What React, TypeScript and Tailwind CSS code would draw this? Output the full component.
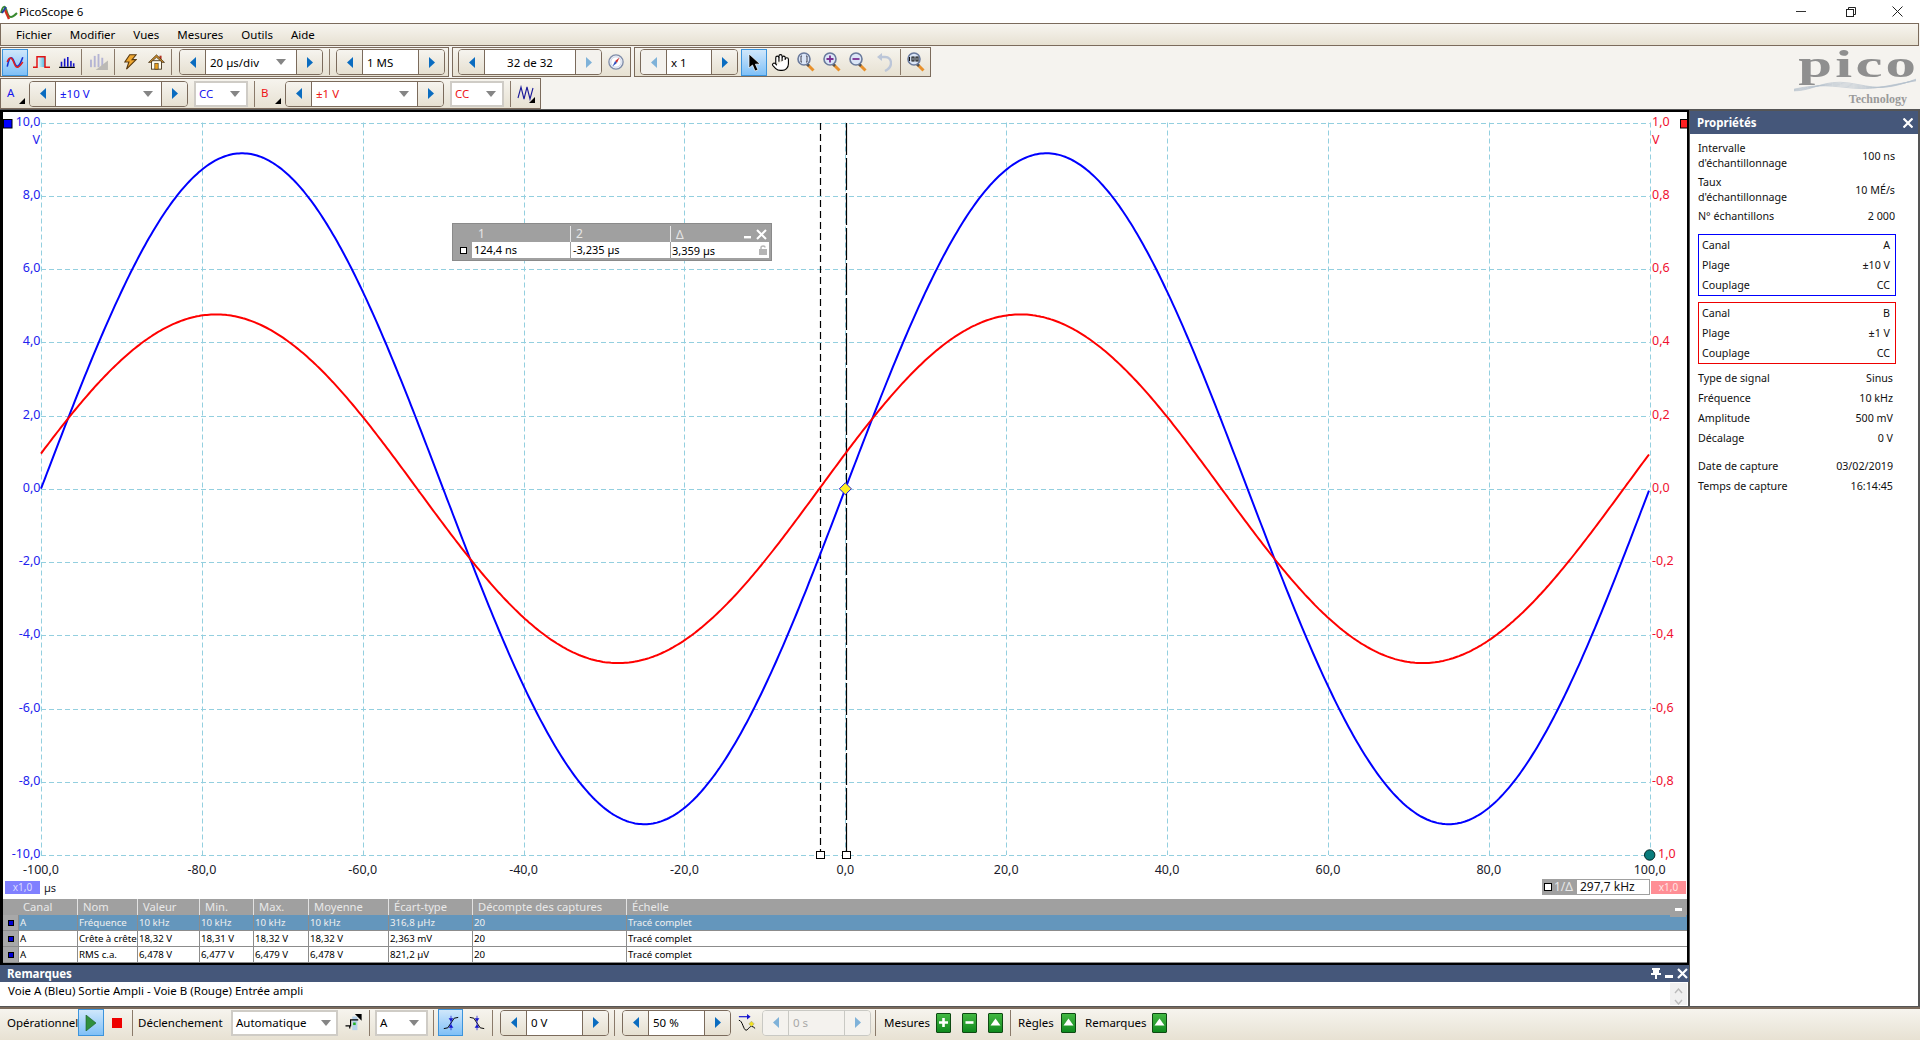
import React from "react";
import { Hand } from "lucide-react";

const Tri = ({ dir, off }: { dir: "l" | "r"; off?: boolean }) => (
  <svg width="8" height="13" viewBox="0 0 8 13">
    <polygon points={dir === "l" ? "7,1 7,12 1,6.5" : "1,1 1,12 7,6.5"} fill={off ? "#7fb2d9" : "#0a6cc0"} />
  </svg>
);

const Drop = () => (
  <svg width="10" height="6" viewBox="0 0 10 6">
    <polygon points="0,0 10,0 5,6" fill="#858585" />
  </svg>
);

const Corner = () => (
  <svg width="6" height="6" viewBox="0 0 6 6">
    <polygon points="6,0 6,6 0,6" fill="#000" />
  </svg>
);

const Sep = ({ ml = 0, mr = 0 }: { ml?: number; mr?: number }) => (
  <div className="w-px h-[26px] bg-[#8a7a6a] shrink-0" style={{ marginLeft: ml, marginRight: mr }} />
);

const Spin = ({
  w, side = 25, text, color = "#000", center, off, ml = 0, rightOff, leftOff,
}: {
  w: number; side?: number; text: string; color?: string; center?: boolean; off?: boolean; ml?: number; rightOff?: boolean; leftOff?: boolean;
}) => (
  <div
    className={`flex h-[26px] shrink-0 rounded-[4px] border overflow-hidden ${off ? "border-[#c9c9c4]" : "border-[#7b6b5c]"}`}
    style={{ width: w, marginLeft: ml }}
  >
    <div className={`flex items-center justify-center ${off || leftOff ? "bg-[#f4f2ee]" : "bg-gradient-to-b from-[#f6f4ef] to-[#e6e0d1]"}`} style={{ width: side }}>
      <Tri dir="l" off={off || leftOff} />
    </div>
    <div className={`flex-1 flex items-center px-[4px] border-x ${off ? "bg-[#f4f2ee] border-[#c9c9c4] text-[#a8a8a8]" : "bg-white border-[#7b6b5c]"} ${center ? "justify-center" : ""}`} style={off ? undefined : { color }}>
      {text}
    </div>
    <div className={`flex items-center justify-center ${off || rightOff ? "bg-[#f4f2ee]" : "bg-gradient-to-b from-[#f6f4ef] to-[#e6e0d1]"}`} style={{ width: side }}>
      <Tri dir="r" off={off || rightOff} />
    </div>
  </div>
);

const DropSpin = ({ w, text, color = "#000", ml, pr = 8 }: { w: number; text: string; color?: string; ml?: number; pr?: number }) => (
  <div className="flex h-[26px] shrink-0 rounded-[4px] border border-[#7b6b5c] overflow-hidden" style={{ width: w, marginLeft: ml }}>
    <div className="w-[25px] flex items-center justify-center bg-gradient-to-b from-[#f6f4ef] to-[#e6e0d1]"><Tri dir="l" /></div>
    <div className="flex-1 flex items-center justify-between pl-[4px] bg-white border-x border-[#7b6b5c]" style={{ color, paddingRight: pr }}>
      <span>{text}</span><Drop />
    </div>
    <div className="w-[25px] flex items-center justify-center bg-gradient-to-b from-[#f6f4ef] to-[#e6e0d1]"><Tri dir="r" /></div>
  </div>
);

const Combo = ({ w, text, color = "#000", ml = 0, pr = 6 }: { w: number; text: string; color?: string; ml?: number; pr?: number }) => (
  <div className="flex items-center justify-between h-[26px] shrink-0 bg-white border-2 border-[#cfccc6] pl-[3px]" style={{ width: w, marginLeft: ml, paddingRight: pr, color }}>
    <span>{text}</span><Drop />
  </div>
);

const Active = ({ children, w = 26, ml = 0 }: { children: React.ReactNode; w?: number; ml?: number }) => (
  <div className="flex items-center justify-center h-[27px] shrink-0 border border-[#3c94dc] bg-gradient-to-b from-[#cfe7fb] to-[#7fc0f7]" style={{ width: w, marginLeft: ml }}>
    {children}
  </div>
);

const Cell = ({ w, ml = 0, children }: { w: number; ml?: number; children: React.ReactNode }) => (
  <div className="flex items-center justify-center h-[27px] shrink-0" style={{ width: w, marginLeft: ml }}>{children}</div>
);

const WaveIcon = () => (
  <svg width="18" height="14" viewBox="0 0 22 18" fill="none" strokeWidth="2">
    <path d="M1 15C4 1 7 1 10 9S16 17 21 3" stroke="#1530d0" />
    <path d="M1 9C4 1 7 3 10 11S16 16 21 9" stroke="#e02020" />
  </svg>
);
const SquareIcon = () => (
  <svg width="17" height="12" viewBox="0 0 17 12" fill="none">
    <defs>
      <linearGradient id="sq" x1="0" x2="1" y1="0" y2="0">
        <stop offset="0" stopColor="#ffffff" /><stop offset="1" stopColor="#4ab8e0" />
      </linearGradient>
    </defs>
    <rect x="4" y="1" width="8" height="10" fill="url(#sq)" />
    <path d="M0 11.2H4V0.8H12V11.2H17" stroke="#e01414" strokeWidth="1.5" />
  </svg>
);
const BarsIcon = () => (
  <svg width="16" height="11" viewBox="0 0 20 14">
    <rect x="0" y="12.4" width="20" height="1.6" fill="#000" />
    <rect x="2" y="6" width="2" height="6.4" fill="#1414c8" /><rect x="6" y="2" width="2" height="10.4" fill="#1414c8" />
    <rect x="10" y="0" width="2" height="12.4" fill="#1414c8" /><rect x="14" y="5" width="2" height="7.4" fill="#1414c8" />
    <rect x="17.5" y="8" width="2" height="4.4" fill="#1414c8" />
  </svg>
);
const GreyBars = () => (
  <svg width="19" height="16" viewBox="0 0 20 17">
    <rect x="1" y="6" width="2" height="8" fill="#b4b4d4" /><rect x="5" y="2" width="2" height="12" fill="#b4b4d4" />
    <rect x="9" y="0" width="2" height="14" fill="#b4b4d4" /><rect x="13" y="4" width="2" height="10" fill="#b4b4d4" />
    <polygon points="20,7 20,17 7,17" fill="#bbb9b5" />
  </svg>
);
const Bolt = () => (
  <svg width="13" height="16" viewBox="0 0 16 20">
    <polygon points="7,1 15,1 10,7 15,7 3,19 6,10 1,10" fill="#f0a830" stroke="#5a3a10" strokeWidth="1.4" />
  </svg>
);
const House = () => (
  <svg width="17" height="16" viewBox="0 0 20 19">
    <rect x="13.5" y="2" width="2.5" height="5" fill="#b03020" />
    <rect x="4" y="8" width="12" height="10" fill="#fffdf0" stroke="#3a2a10" />
    <polygon points="0.5,10 10,1 19.5,10 17,10 10,4 3,10" fill="#c98a28" stroke="#3a2a10" strokeWidth="0.8" />
    <rect x="8" y="11" width="4" height="7" fill="#e8a020" stroke="#3a2a10" strokeWidth="0.7" />
  </svg>
);
const Compass = () => (
  <svg width="16" height="16" viewBox="0 0 18 18">
    <circle cx="9" cy="9" r="8" fill="#eef2fa" stroke="#7f8ca8" strokeWidth="1.5" />
    <circle cx="9" cy="9" r="5.8" fill="#fff" stroke="#c2cbe0" strokeWidth="0.8" />
    <polygon points="13,4 10,10 8,8" fill="#d03030" /><polygon points="5,14 8,8 10,10" fill="#3050c0" />
  </svg>
);
const Cursor = () => (
  <svg width="14" height="19" viewBox="0 0 14 19">
    <polygon points="2,1 2,15 5.5,12 8,18 11,17 8.4,11.2 13,11" fill="#000" stroke="#fff" strokeWidth="0.7" />
  </svg>
);
const Mag = ({ g }: { g: "fit" | "plus" | "minus" | "100" }) => (
  <svg width="18" height="20" viewBox="0 0 18 20">
    <path d="M10 12L16.5 18.5" stroke="#e8902a" strokeWidth="3" />
    <path d="M9.5 11.5L12 14" stroke="#555" strokeWidth="2.5" />
    <circle cx="7" cy="7" r="6" fill="#dbe6f7" stroke="#6a7a9c" strokeWidth="1.6" />
    {g === "plus" && <path d="M3.5 7H10.5M7 3.5V10.5" stroke="#7b2f92" strokeWidth="1.8" />}
    {g === "minus" && <path d="M3.5 7H10.5" stroke="#7b2f92" strokeWidth="1.8" />}
    {g === "fit" && <path d="M5 4H4V10H5M9 4H10V10H9" stroke="#445" strokeWidth="1" fill="none" />}
    {g === "100" && <path d="M2.5 5V9M5 5H7V9H5ZM9 5H11V9H9Z" stroke="#111" strokeWidth="1.1" fill="none" />}
  </svg>
);
const Undo = () => (
  <svg width="16" height="19" viewBox="0 0 16 19" fill="none">
    <path d="M5 4H9C13 4 15 7 15 10S13 16 9 18" stroke="#bcc6d8" strokeWidth="2.4" />
    <polygon points="1,4 6,0 6,8" fill="#bcc6d8" />
  </svg>
);
const ChanIcon = () => (
  <svg width="18" height="18" viewBox="0 0 18 18" fill="none">
    <path d="M1 13L4 2L7 14L10 2L13 14L16 3" stroke="#1a1a9a" strokeWidth="1.1" />
    <polygon points="18,12 18,18 12,18" fill="#000" />
  </svg>
);
const TrigIcon = () => (
  <svg width="18" height="17" viewBox="0 0 20 20" fill="none">
    <rect x="8" y="3" width="6" height="16" fill="#b7d3ec" />
    <polygon points="11,0 19,0 19,8" fill="#000" />
    <path d="M0 14H6V7H15" stroke="#000" strokeWidth="1.4" />
    <path d="M5 14V17" stroke="#000" strokeWidth="1.4" />
    <rect x="9" y="10" width="3" height="3" fill="#20b020" />
  </svg>
);
const Rising = () => (
  <svg width="16" height="16" viewBox="0 0 20 20" fill="none">
    <path d="M1 17L6 16L14 4L19 3" stroke="#000" strokeWidth="1.2" />
    <polygon points="7,4 13,4 10,8" fill="#1414d0" /><polygon points="7,16 13,16 10,12" fill="#1414d0" />
    <path d="M10 1V19" stroke="#1414d0" strokeWidth="0.9" />
  </svg>
);
const Falling = () => (
  <svg width="16" height="16" viewBox="0 0 20 20" fill="none">
    <path d="M1 3L6 4L14 16L19 17" stroke="#000" strokeWidth="1.2" />
    <polygon points="7,4 13,4 10,8" fill="#1414d0" /><polygon points="7,16 13,16 10,12" fill="#1414d0" />
    <path d="M10 1V19" stroke="#1414d0" strokeWidth="0.9" />
  </svg>
);
const PreTrig = () => (
  <svg width="18" height="18" viewBox="0 0 20 20" fill="none">
    <path d="M1 7C5 7 6 18 9 18S13 10 19 16" stroke="#000" strokeWidth="1.1" />
    <path d="M1 3H12" stroke="#1414d0" strokeWidth="1.3" /><polygon points="10,0 14,3 10,6" fill="#1414d0" />
    <polygon points="15,8 18,11 15,14 12,11" fill="#f0e020" stroke="#998" strokeWidth="0.6" />
  </svg>
);
const Green = ({ kind, ml = 0 }: { kind: "plus" | "minus" | "up"; ml?: number }) => (
  <div className="w-[15px] h-[20px] shrink-0 border border-[#0d4a12] rounded-[1px] bg-gradient-to-b from-[#42b842] to-[#0b8a1e] flex items-center justify-center" style={{ marginLeft: ml }}>
    <svg width="11" height="11" viewBox="0 0 11 11">
      {kind === "plus" && <path d="M5.5 1V10M1 5.5H10" stroke="#fff" strokeWidth="2.6" />}
      {kind === "minus" && <path d="M1.5 5.5H9.5" stroke="#fff" strokeWidth="2.6" />}
      {kind === "up" && <polygon points="5.5,1.5 10.5,8.5 0.5,8.5" fill="#fff" />}
    </svg>
  </div>
);

const PropRow = ({ l, r }: { l: string; r: string }) => (
  <div className="flex justify-between h-[20px] items-center"><span>{l}</span><span>{r}</span></div>
);

const Chart = () => {
  const X0 = 41, X1 = 1649.7, Y0 = 122.5, Y1 = 855;
  const cx = (X0 + X1) / 2, cy = (Y0 + Y1) / 2;
  const pxT = (X1 - X0) / 200, pxV = (Y1 - Y0) / 20;
  const pts = (amp: number, shift: number) => {
    const a: string[] = [];
    for (let x = X0; x <= X1; x += 2) {
      const t = (x - cx) / pxT;
      a.push(`${x.toFixed(1)},${(cy - amp * pxV * Math.sin((2 * Math.PI * (t + shift)) / 100)).toFixed(1)}`);
    }
    return a.join(" ");
  };
  const xs = Array.from({ length: 11 }, (_, i) => i);
  const fmt = (v: number) => v.toFixed(1).replace(".", ",");
  const grid = "#93cfdf";
  return (
    <svg className="block w-full h-full" viewBox="3 112 1684 787">
      {xs.map((i) => {
        const x = Math.round(X0 + (i * (X1 - X0)) / 10) + 0.5;
        return <line key={i} x1={x} x2={x} y1={Y0} y2={Y1} stroke={grid} strokeDasharray="5 3" />;
      })}
      {xs.map((i) => {
        const y = Math.round(Y0 + (i * (Y1 - Y0)) / 10) + 0.5;
        return <line key={i} x1={X0} x2={X1} y1={y} y2={y} stroke={grid} strokeDasharray="5 3" />;
      })}
      <line x1="820.5" x2="820.5" y1="123" y2="851" stroke="#000" strokeWidth="1.2" strokeDasharray="7 4" />
      <line x1="846.5" x2="846.5" y1="123" y2="851" stroke="#000" strokeWidth="1.2" strokeDasharray="32 3" />
      <polyline points={pts(9.16, 0)} fill="none" stroke="#0000ff" strokeWidth="2" />
      <polyline points={pts(4.76, 3.235)} fill="none" stroke="#ff0000" strokeWidth="2" />
      <polygon points={`${cx},${cy - 6} ${cx + 6},${cy} ${cx},${cy + 6} ${cx - 6},${cy}`} fill="#ffee22" stroke="#1a1ae0" />
      <rect x="816.5" y="851.5" width="8" height="7" fill="#fff" stroke="#000" />
      <rect x="842.5" y="851.5" width="8" height="7" fill="#fff" stroke="#000" />
      <rect x="3.5" y="119.5" width="8.5" height="8.5" fill="#0000ff" stroke="#000" />
      <rect x="1680.5" y="119.5" width="7" height="8.5" fill="#ff2020" stroke="#000" />
      <g fontSize="12.5" textAnchor="end" fill="#2222ee">
        {xs.map((i) => (
          <text key={i} x="40.5" y={Y0 + (i * (Y1 - Y0)) / 10 + 3}>{fmt(10 - 2 * i)}</text>
        ))}
        <text x="40" y="144">V</text>
      </g>
      <g fontSize="12.5" fill="#f01030">
        {xs.map((i) => (
          <text key={i} x={i === 10 ? 1658 : 1652} y={Y0 + (i * (Y1 - Y0)) / 10 + 3}>{i === 10 ? "1,0" : fmt(1 - 0.2 * i)}</text>
        ))}
        <text x="1652" y="144">V</text>
      </g>
      <g fontSize="12.5" textAnchor="middle" fill="#1a1a2a">
        {xs.map((i) => (
          <text key={i} x={X0 + (i * (X1 - X0)) / 10} y="874">{fmt(-100 + 20 * i)}</text>
        ))}
      </g>
      <circle cx="1649.7" cy="855" r="5.2" fill="#0a7c7c" stroke="#062a2a" />
    </svg>
  );
};

const cols = "grid grid-cols-[15px_59px_60px_62px_54px_55px_80px_84px_154px_1fr]";
const th = ["", "Canal", "Nom", "Valeur", "Min.", "Max.", "Moyenne", "Écart-type", "Décompte des captures", "Échelle"];
const rows = [
  ["A", "Fréquence", "10 kHz", "10 kHz", "10 kHz", "10 kHz", "316,8 µHz", "20", "Tracé complet"],
  ["A", "Crête à crête", "18,32 V", "18,31 V", "18,32 V", "18,32 V", "2,363 mV", "20", "Tracé complet"],
  ["A", "RMS c.a.", "6,478 V", "6,477 V", "6,479 V", "6,478 V", "821,2 µV", "20", "Tracé complet"],
];

const Logo = () => (
  <div className="ml-auto mr-[4px] mt-[4px] w-[122px] flex flex-col items-center text-[#8f8f8f] font-['Liberation_Serif',serif]">
    <div className="text-[38px] leading-[28px] h-[28px] font-bold tracking-[2px] scale-x-[1.6] translate-x-[4px] origin-center">pico</div>
    <svg width="122" height="14" viewBox="0 0 124 14" fill="none" stroke="#b4c0cc" strokeWidth="0.6">
      {[0, 1.5, 3, 4.5, 6].map((d) => (
        <path key={d} d={`M0 ${13 - d * 0.3}C20 ${13 - d} 30 ${1 + d} 56 ${5 + d * 0.8}S90 ${14 - d} 124 ${1 + d * 0.3}`} />
      ))}
    </svg>
    <div className="text-[12px] leading-[13px] font-bold self-end mr-[9px] mt-px text-[#9a9a9a]">Technology</div>
  </div>
);

export default function App() {
  return (
    <div className="w-[1920px] h-[1040px] overflow-hidden flex flex-col bg-[#f5f3ef] text-black text-[11.5px] font-['Noto_Sans',sans-serif]">
      {/* title bar */}
      <div className="h-[23px] bg-white flex items-center shrink-0">
        <svg width="18" height="16" viewBox="0 0 18 16" fill="none">
          <path d="M1 9C3 1 5 1 7 8S12 14 17 9" stroke="#3a8a30" strokeWidth="2" />
          <path d="M5 6L9 15" stroke="#d03020" strokeWidth="2.4" /><path d="M2 9L6 3" stroke="#2040a0" strokeWidth="2" />
        </svg>
        <span className="ml-px">PicoScope 6</span>
        <div className="ml-auto flex items-center">
          <div className="w-[46px] flex justify-center"><div className="w-[10px] h-px bg-[#333]" /></div>
          <div className="w-[46px] ml-[4px] flex justify-center">
            <svg width="10" height="10" viewBox="0 0 10 10" fill="none" stroke="#222"><rect x="0.5" y="2.5" width="7" height="7" fill="#fff" /><path d="M2.5 2.5V0.5H9.5V7.5H7.5" /></svg>
          </div>
          <div className="w-[46px] flex justify-center">
            <svg width="11" height="11" viewBox="0 0 11 11" stroke="#222"><path d="M0.5 0.5L10.5 10.5M10.5 0.5L0.5 10.5" /></svg>
          </div>
        </div>
      </div>
      {/* menu */}
      <div className="h-[23px] shrink-0 mr-px flex items-center pl-[15px] gap-[18px] border border-[#7b6b5c] bg-gradient-to-b from-[#f7f5f0] to-[#e7e1d2]">
        <span>Fichier</span><span>Modifier</span><span>Vues</span><span>Mesures</span><span>Outils</span><span>Aide</span>
      </div>
      {/* toolbars + logo */}
      <div className="flex h-[63px] shrink-0">
        <div className="flex flex-col">
          <div className="flex mt-px h-[31px]">
            <div className="flex items-center w-[449px] border border-[#7b6b5c] bg-gradient-to-b from-[#f6f4ee] to-[#e7e1d2]">
              <Active ml={1}><WaveIcon /></Active>
              <Cell w={26}><SquareIcon /></Cell>
              <Cell w={26}><BarsIcon /></Cell>
              <Sep ml={1} />
              <Cell w={32}><GreyBars /></Cell>
              <Sep />
              <Cell w={30}><Bolt /></Cell>
              <Cell w={22}><House /></Cell>
              <Sep ml={4} />
              <DropSpin ml={7} w={144} text="20 µs/div" pr={10} />
              <Sep ml={6} />
              <Spin ml={6} w={109} text="1 MS" />
            </div>
            <div className="flex items-center w-[179px] ml-[3px] border border-[#7b6b5c] bg-gradient-to-b from-[#f6f4ee] to-[#e7e1d2]">
              <Spin ml={5} w={144} text="32 de 32" center rightOff />
              <Cell w={28}><Compass /></Cell>
            </div>
            <div className="flex items-center w-[297px] ml-[3px] border border-[#7b6b5c] bg-gradient-to-b from-[#f6f4ee] to-[#e7e1d2]">
              <Spin ml={5} w={98} text="x 1" leftOff />
              <Active ml={3}><Cursor /></Active>
              <Cell w={26}><Hand size={19} strokeWidth={1.4} color="#000" fill="#fff" /></Cell>
              <Cell w={26}><Mag g="fit" /></Cell>
              <Cell w={26}><Mag g="plus" /></Cell>
              <Cell w={26}><Mag g="minus" /></Cell>
              <Cell w={26}><Undo /></Cell>
              <Sep ml={3} />
              <Cell w={30}><Mag g="100" /></Cell>
            </div>
          </div>
          <div className="flex items-center w-[541px] h-[31px] mt-px border border-[#7b6b5c] bg-gradient-to-b from-[#f6f4ee] to-[#e7e1d2]">
            <div className="w-[28px] h-[26px] shrink-0 flex items-end pl-[6px] pb-[3px]">
              <span className="text-[#1414ee] mb-[2px] w-[12px]">A</span><Corner />
            </div>
            <DropSpin w={159} text="±10 V" color="#1414ee" />
            <Combo ml={6} w={54} text="CC" color="#1414ee" />
            <Sep ml={6} />
            <div className="w-[30px] h-[26px] shrink-0 flex items-end pl-[6px] pb-[3px]">
              <span className="text-[#ee1414] mb-[2px] w-[14px]">B</span><Corner />
            </div>
            <DropSpin w={159} text="±1 V" color="#ee1414" />
            <Combo ml={6} w={54} text="CC" color="#ee1414" />
            <Sep ml={6} />
            <Cell w={30}><ChanIcon /></Cell>
          </div>
        </div>
        <Logo />
      </div>
      {/* main */}
      <div className="flex h-[898px] shrink-0 bg-[#555] pt-px pb-px">
        <div className="w-[1689px] flex flex-col shrink-0">
          <div className="flex-1 flex flex-col border-l-[3px] border-r-[2px] border-t-[2px] border-b-[2px] border-black min-h-0 bg-white">
            <div className="relative flex-1 min-h-0 bg-white">
              <Chart />
              {/* cursor table */}
              <div className="absolute left-[450px] top-[112px] w-[318px] h-[36px] border-2 border-[#a0a0a0] outline outline-1 outline-[#8a8a8a] bg-[#a0a0a0] flex flex-col">
                <div className="flex h-[16px] text-[#e6e6e6] text-[12px] leading-[15px]">
                  <div className="w-[17px]" />
                  <div className="w-[99px] pl-[6px] border-r border-[#e8e8e8]">1</div>
                  <div className="w-[100px] pl-[5px] border-r border-[#e8e8e8]">2</div>
                  <div className="flex-1 pl-[5px] flex items-center justify-between pr-[2px]">
                    <span>Δ</span>
                    <span className="flex items-center gap-[4px]">
                      <svg width="9" height="9" viewBox="0 0 9 9"><rect x="1" y="6" width="7" height="2.4" fill="#fff" /></svg>
                      <svg width="11" height="11" viewBox="0 0 11 11" stroke="#fff" strokeWidth="2"><path d="M1 1L10 10M10 1L1 10" /></svg>
                    </span>
                  </div>
                </div>
                <div className="flex h-[16px] text-[11px] leading-[15px]">
                  <div className="w-[17px] flex items-center justify-center"><div className="w-[7px] h-[7px] bg-white border border-black" /></div>
                  <div className="w-[99px] pl-[2px] bg-white border-r border-[#a0a0a0]">124,4 ns</div>
                  <div className="w-[100px] pl-[2px] bg-white border-r border-[#a0a0a0]">-3,235 µs</div>
                  <div className="flex-1 pl-px bg-white flex items-center justify-between pr-[2px]">
                    <span>3,359 µs</span>
                    <svg width="8" height="10" viewBox="0 0 8 10" fill="none"><rect x="0" y="4" width="8" height="6" fill="#b5b5b5" /><path d="M2 4V2.5C2 0.5 6 0.5 6 2.5" stroke="#b5b5b5" strokeWidth="1.4" /></svg>
                  </div>
                </div>
              </div>
              {/* axis tags */}
              <div className="absolute left-[2px] bottom-[5px] flex items-center">
                <div className="w-[35px] h-[13px] bg-[#8080ff] text-[#dcdcff] text-[10px] leading-[13px] text-center">x1,0</div>
                <span className="ml-[4px] text-[11px] text-[#1a1a2a] leading-[13px]">µs</span>
              </div>
              <div className="absolute right-[1px] bottom-[4px] flex items-center">
                <div className="flex items-center h-[16px] w-[108px] bg-[#a0a0a0] text-[#e8e8e8] text-[12px] leading-[14px]">
                  <div className="w-[8px] h-[8px] ml-[2px] bg-white border border-black shrink-0" />
                  <span className="ml-[2px] w-[23px] shrink-0">1/Δ</span>
                  <div className="flex-1 h-[14px] mr-px bg-white text-[12px] text-[#111] pl-[3px]">297,7 kHz</div>
                </div>
                <div className="w-[35px] h-[13px] ml-px bg-[#ff8e95] text-[#ffe4e4] text-[10px] leading-[13px] text-center">x1,0</div>
              </div>
            </div>
            {/* measures table */}
            <div className="shrink-0 relative bg-white">
              <div className={`${cols} h-[16px] bg-[#a0a0a0] text-[#e9e9e9] text-[11.2px] leading-[15px]`}>
                {th.map((t, i) => (
                  <div key={i} className={`pl-[5px] ${i > 1 ? "border-l border-[#e2e2e2]" : ""}`}>{t}</div>
                ))}
              </div>
              <div className="absolute right-[1px] top-[3px] w-[16px] h-[15px] bg-[#a0a0a0] flex items-center justify-center">
                <div className="w-[7px] h-[3px] bg-white" />
              </div>
              {rows.map((r, ri) => (
                <div key={ri} className={`${cols} h-[16px] text-[9.7px] leading-[15px] border-b border-[#8c8c8c] ${ri === 0 ? "bg-[#6496bc] text-[#f0f0f0]" : "bg-white text-black"}`}>
                  <div className="bg-[#a8a8a8] flex items-center justify-center">
                    <div className="w-[6px] h-[6px] bg-[#0000d0] border border-black" />
                  </div>
                  {r.map((c, i) => (
                    <div key={i} className="pl-[1px] border-l border-[#8c8c8c] whitespace-nowrap">{c}</div>
                  ))}
                </div>
              ))}
            </div>
          </div>
          {/* remarks */}
          <div className="h-[41px] shrink-0 flex flex-col">
            <div className="h-[17px] bg-[#45577a] flex items-center pl-[7px] text-white text-[11.5px] font-bold">
              <span>Remarques</span>
              <div className="ml-auto flex items-center gap-[4px] pr-[1px]">
                <svg width="10" height="11" viewBox="0 0 10 11" fill="#fff"><rect x="1" y="0" width="8" height="2" /><rect x="0" y="5" width="10" height="2" /><rect x="2" y="2" width="6" height="3" /><rect x="4" y="7" width="2" height="4" /></svg>
                <svg width="8" height="9" viewBox="0 0 8 9"><rect x="0" y="6" width="8" height="3" fill="#fff" /></svg>
                <svg width="11" height="11" viewBox="0 0 11 11" stroke="#fff" strokeWidth="2.2"><path d="M1 1L10 10M10 1L1 10" /></svg>
              </div>
            </div>
            <div className="flex-1 flex bg-white mr-px">
              <span className="pl-[8px] text-[11.5px] leading-[17px]">Voie A (Bleu) Sortie Ampli - Voie B (Rouge) Entrée ampli</span>
              <div className="ml-auto mr-[1px] my-px w-[17px] bg-[#f0f0f0] flex flex-col items-center justify-between">
                <svg width="9" height="6" viewBox="0 0 9 6" className="mt-[5px]" fill="none" stroke="#bbb" strokeWidth="1.4"><path d="M1 5L4.5 1L8 5" /></svg>
                <svg width="9" height="6" viewBox="0 0 9 6" fill="none" stroke="#bbb" strokeWidth="1.4"><path d="M1 1L4.5 5L8 1" /></svg>
              </div>
            </div>
          </div>
        </div>
        {/* properties */}
        <div className="flex-1 ml-px mr-[2px] pt-px bg-[#555] flex flex-col text-[10.7px] text-[#111]">
          <div className="h-[23px] bg-[#45577a] flex items-center justify-between pl-[7px] pr-[5px] text-white text-[11.5px] font-bold shrink-0">
            <span>Propriétés</span>
            <svg width="10" height="10" viewBox="0 0 10 10" stroke="#fff" strokeWidth="2.2"><path d="M0.5 0.5L9.5 9.5M9.5 0.5L0.5 9.5" /></svg>
          </div>
          <div className="flex-1 bg-white pl-[8px] pr-[23px] pt-[7px]">
            <div className="flex justify-between items-center leading-[15px] h-[30px]">
              <span>Intervalle<br />d'échantillonnage</span><span>100 ns</span>
            </div>
            <div className="flex justify-between items-center leading-[15px] h-[30px] mt-[4px]">
              <span>Taux<br />d'échantillonnage</span><span>10 MÉ/s</span>
            </div>
            <div className="flex justify-between items-center leading-[15px] h-[15px] mt-[4px]">
              <span>N° échantillons</span><span>2 000</span>
            </div>
            <div className="-mr-px border-[1.5px] border-[#0000ff] h-[62px] mt-[10px] pl-[3px] pr-[5px] flex flex-col justify-center">
              <PropRow l="Canal" r="A" /><PropRow l="Plage" r="±10 V" /><PropRow l="Couplage" r="CC" />
            </div>
            <div className="-mr-px border-[1.5px] border-[#ee0000] h-[62px] mt-[6px] pl-[3px] pr-[5px] flex flex-col justify-center">
              <PropRow l="Canal" r="B" /><PropRow l="Plage" r="±1 V" /><PropRow l="Couplage" r="CC" />
            </div>
            <div className="mt-[4px] pr-[2px]">
              <PropRow l="Type de signal" r="Sinus" /><PropRow l="Fréquence" r="10 kHz" />
              <PropRow l="Amplitude" r="500 mV" /><PropRow l="Décalage" r="0 V" />
            </div>
            <div className="mt-[8px] pr-[2px]">
              <PropRow l="Date de capture" r="03/02/2019" /><PropRow l="Temps de capture" r="16:14:45" />
            </div>
          </div>
        </div>
      </div>
      {/* bottom toolbar */}
      <div className="flex-1 flex items-center border-t-2 border-[#7b6b5c] bg-gradient-to-b from-[#f6f4ee] to-[#e7e1d2] pb-[5px]">
        <span className="ml-[7px] w-[71px] shrink-0">Opérationnel</span>
        <Active><svg width="12" height="16" viewBox="0 0 12 16"><polygon points="1,0 11,8 1,16" fill="#2f8f3c" stroke="#1a5a24" strokeWidth="0.6" /></svg></Active>
        <div className="w-[10px] h-[10px] ml-[8px] bg-[#ee0000] shrink-0" />
        <Sep ml={10} />
        <span className="ml-[5px] w-[93px] shrink-0">Déclenchement</span>
        <Combo w={107} text="Automatique" pr={5} />
        <Cell w={31}><TrigIcon /></Cell>
        <Sep />
        <Combo ml={5} w={53} text="A" pr={7} />
        <Sep ml={5} />
        <Active ml={4} w={25}><Rising /></Active>
        <Cell w={28}><Falling /></Cell>
        <Sep ml={1} />
        <Spin ml={7} w={109} text="0 V" />
        <Sep ml={5} />
        <Spin ml={7} w={109} text="50 %" />
        <Cell w={31}><PreTrig /></Cell>
        <Spin w={109} text="0 s" off />
        <Sep ml={4} />
        <span className="ml-[8px] w-[52px] shrink-0">Mesures</span>
        <Green kind="plus" />
        <Green kind="minus" ml={11} />
        <Green kind="up" ml={11} />
        <Sep ml={7} />
        <span className="ml-[7px] w-[43px] shrink-0">Règles</span>
        <Green kind="up" />
        <span className="ml-[9px] w-[67px] shrink-0">Remarques</span>
        <Green kind="up" />
      </div>
    </div>
  );
}
